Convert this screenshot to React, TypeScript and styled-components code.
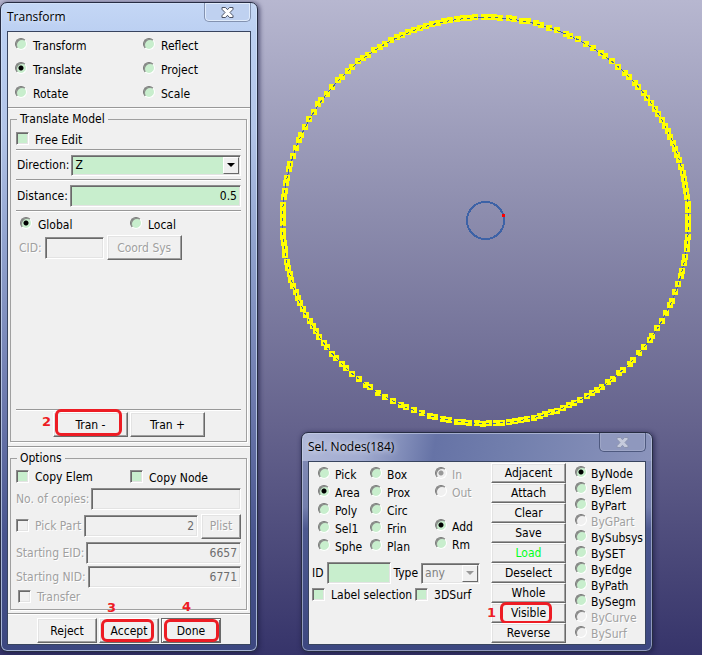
import React from 'react';
import styled, { createGlobalStyle, css } from 'styled-components';

const GlobalStyle = createGlobalStyle`
  * { box-sizing: border-box; }
  body {
    margin: 0;
    font-family: "DejaVu Sans Condensed", "DejaVu Sans", sans-serif;
    font-size: 12px;
    line-height: 14px;
    color: #000;
  }
  button, input, select { font: inherit; color: inherit; }
`;

const GREEN = '#c8eecd';
const sunken = css`
  border: 1px solid;
  border-color: #8c8c8c #fff #fff #8c8c8c;
  box-shadow: inset 1px 1px 0 #696969, inset -1px -1px 0 #e3e3e3;
`;
const embossed = css`
  color: #a0a0a0;
  text-shadow: 1px 1px 0 #fff;
`;

const Desktop = styled.main`
  position: relative;
  min-height: max(100vh, 655px);
  overflow: hidden;
  background: linear-gradient(#b7b7d0 0%, #8c8cad 33%, #65638d 65%, #36346a 100%);
`;

const Viewport = styled.svg`
  position: absolute;
  inset: 0;
  width: 100%;
  height: 100%;
  shape-rendering: crispEdges;
`;

const WindowFrame = styled.section<{ $kind: 'tool' | 'picker' }>`
  position: absolute;
  display: flex;
  flex-direction: column;
  padding: 0 6px 6px;
  border: 1px solid #262c42;
  border-radius: 7px;
  ${(p) =>
    p.$kind === 'tool'
      ? css`
          left: 0;
          top: 2px;
          bottom: 3px;
          width: 258px;
          background: linear-gradient(#c4d7f5 0, #bcd0f2 28px, #b2c4e8 20%, #93a5d0 36%, #6c79ad 62%, #49558f 82%, #3c4780 100%);
          box-shadow: inset 0 0 0 1px #d5e3f9b0, 1px 1px 4px 1px #1e1e4699;
        `
      : css`
          left: 301px;
          top: 432px;
          width: 352px;
          background: linear-gradient(100deg, #b0b8d8 0, #a2acd0 18%, #6673a6 38%, #727fad 60%, #8b94bc 100%) 0 0 / 100% 28px no-repeat,
            linear-gradient(#8790b9 0, #737eac 34%, #4d5990 44%, #3c4780 100%);
          box-shadow: inset 0 0 0 1px #cfd6eb90, 1px 1px 4px 1px #1e1e4699;
        `}
`;

const TitleBar = styled.header`
  display: flex;
  justify-content: space-between;
  flex: none;
  height: 28px;
`;

const Title = styled.h1`
  margin: 0;
  padding-top: 5px;
  font: 12px/18px "Open Sans", "Noto Sans", sans-serif;
  text-shadow: 0 0 6px #fff;
`;

const CloseButton = styled.button<{ $dim?: boolean }>`
  display: grid;
  place-items: center;
  width: 47px;
  height: 19px;
  padding: 0;
  border: 1px solid ${(p) => (p.$dim ? '#4e597f' : '#8392b0')};
  border-top: 0;
  border-radius: 0 0 5px 5px;
  background: ${(p) => (p.$dim ? '#8f98be' : '#bfd1f0')};
  box-shadow: inset 0 0 0 1px ${(p) => (p.$dim ? '#b4bcd566' : '#e0ebfb')};
`;

const Client = styled.div<{ $split?: boolean }>`
  display: flex;
  flex: 1;
  flex-direction: ${(p) => (p.$split ? 'row' : 'column')};
  padding-bottom: 1px;
  border: 1px solid #38445f;
  background: #f0f0f0;
`;

const Rule = styled.hr<{ $top?: number; $bottom?: number }>`
  flex: none;
  width: 100%;
  height: 2px;
  margin: ${(p) => p.$top ?? 0}px 0 ${(p) => p.$bottom ?? 0}px;
  border: 0;
  border-top: 1px solid #989898;
  background: #fff;
`;

const ModeGrid = styled.div`
  display: grid;
  grid-template-columns: 128px 1fr;
  grid-auto-rows: 24px;
  padding: 2px 0 0 7px;
`;

const Group = styled.fieldset<{ $grow?: boolean }>`
  display: flex;
  flex-direction: column;
  flex: ${(p) => (p.$grow ? '1' : 'none')};
  min-width: 0;
  margin: 3px 3px 0 2px;
  padding: 0 5px ${(p) => (p.$grow ? '4px' : '3px')};
  border: 1px solid #a0a0a0;
  box-shadow: 1px 1px 0 #fff;
`;

const Legend = styled.legend`
  margin-left: 1px;
  padding: 0 3px;
  height: 14px;
`;

const Row = styled.div<{ $h?: number; $gap?: number; $indent?: number; $top?: number }>`
  display: flex;
  align-items: center;
  flex: none;
  gap: ${(p) => p.$gap ?? 2}px;
  height: ${(p) => p.$h ?? 22}px;
  margin-top: ${(p) => p.$top ?? 0}px;
  padding-left: ${(p) => p.$indent ?? 0}px;
`;

const Cell = styled.div<{ $w: number }>`
  width: ${(p) => p.$w}px;
`;

const Spacer = styled.div`
  flex: 1;
`;

const ChoiceLabel = styled.label<{ $off?: boolean; $gap?: number }>`
  display: inline-flex;
  align-items: center;
  gap: ${(p) => p.$gap ?? 6}px;
  white-space: nowrap;
  ${(p) => p.$off && embossed}
`;

const RadioDot = styled.input`
  appearance: none;
  flex: none;
  width: 12px;
  height: 12px;
  margin: 0 0 4px;
  border: 1px solid;
  border-color: #777 #fff #fff #777;
  border-radius: 50%;
  background: ${GREEN};
  box-shadow: inset 1px 1px 0 #8a8a8a;
  &:checked { background: radial-gradient(circle, #000 0 2px, ${GREEN} 3px); }
  &:disabled { background: #f0f0f0; }
  &:disabled:checked { background: radial-gradient(circle, #999 0 2px, #f0f0f0 3px); }
`;

const TickBox = styled.input`
  appearance: none;
  flex: none;
  width: 13px;
  height: 13px;
  margin: 0 0 2px;
  background: ${GREEN};
  ${sunken}
  &:disabled { background: #f0f0f0; }
`;

const FieldLabel = styled.label<{ $off?: boolean }>`
  white-space: nowrap;
  ${(p) => p.$off && embossed}
`;

const Field = styled.input<{ $w?: number }>`
  flex: ${(p) => (p.$w ? `0 0 ${p.$w}px` : '1')};
  min-width: 0;
  height: 22px;
  margin: 0;
  padding: 0 3px;
  border-radius: 0;
  background: ${GREEN};
  text-align: right;
  ${sunken}
  &:disabled { background: #f0f0f0; color: #6d6d6d; }
`;

const SelectShell = styled.span<{ $w?: number }>`
  position: relative;
  display: flex;
  flex: ${(p) => (p.$w ? `0 0 ${p.$w}px` : '1')};
`;

const Select = styled.select`
  appearance: none;
  width: 100%;
  height: 21px;
  padding: 0 20px 0 3px;
  border-radius: 0;
  background: ${GREEN};
  ${sunken}
  &:disabled { background: #f0f0f0; color: #808080; opacity: 1; }
`;

const Arrow = styled.span<{ $off?: boolean }>`
  position: absolute;
  top: 2px;
  right: 2px;
  display: grid;
  place-items: center;
  width: 16px;
  height: 17px;
  background: #f0f0f0;
  border: 1px solid;
  border-color: #fff #696969 #696969 #fff;
  pointer-events: none;
  color: ${(p) => (p.$off ? '#999' : '#000')};
`;

const PushButton = styled.button<{ $w: number; $h?: number; $heavy?: boolean }>`
  position: relative;
  flex: none;
  width: ${(p) => p.$w}px;
  height: ${(p) => p.$h ?? 25}px;
  padding: 0;
  border: 1px solid;
  border-color: #fff #696969 #696969 #fff;
  border-radius: 0;
  background: #f0f0f0;
  box-shadow: inset -1px -1px 0 #a0a0a0, inset 1px 1px 0 #e3e3e3;
  white-space: nowrap;
  ${(p) => p.$heavy && css`border-color: #696969; box-shadow: inset 1px 1px 0 #fff, inset -1px -1px 0 #696969;`}
  &:disabled { ${embossed} }
`;

const ButtonSlot = styled.span`
  position: relative;
  display: flex;
`;

const Marker = styled.span<{ $box: string }>`
  position: absolute;
  inset: ${(p) => p.$box};
  border: 3px solid #ed1c24;
  border-radius: 6px;
  pointer-events: none;
`;

const StepNumber = styled.span<{ $x: number; $y: number }>`
  position: absolute;
  left: ${(p) => p.$x}px;
  top: ${(p) => p.$y}px;
  color: #ed1c24;
  font: bold 13px/14px "DejaVu Sans", sans-serif;
`;

const PickerMain = styled.div`
  flex: 1;
  min-width: 0;
  padding: 4px 0 0 3px;
`;

const PickerColumns = styled.div`
  display: grid;
  grid-template-columns: 52px 65px 1fr;
  padding-left: 6px;
`;

const Stack = styled.div<{ $pitch: number; $w?: number; $top?: number }>`
  display: grid;
  flex: none;
  align-content: start;
  grid-auto-rows: ${(p) => p.$pitch}px;
  width: ${(p) => (p.$w ? `${p.$w}px` : 'auto')};
  padding-top: ${(p) => p.$top ?? 0}px;
`;

const LoadText = styled.span`
  color: #00ff21;
`;

type ChoiceProps = { name: string; text: string; on?: boolean; off?: boolean; gap?: number };

const Radio = ({ name, text, on, off, gap }: ChoiceProps) => (
  <ChoiceLabel $off={off} $gap={gap}>
    <RadioDot type="radio" name={name} defaultChecked={on} disabled={off} />
    {text}
  </ChoiceLabel>
);

const Check = ({ text, off }: { text: string; off?: boolean }) => (
  <ChoiceLabel $off={off}>
    <TickBox type="checkbox" disabled={off} />
    {text}
  </ChoiceLabel>
);

const DropDown = ({ id, value, off, w }: { id: string; value: string; off?: boolean; w?: number }) => (
  <SelectShell $w={w}>
    <Select id={id} disabled={off} defaultValue={value}>
      <option>{value}</option>
    </Select>
    <Arrow $off={off}>
      <svg width="8" height="4" viewBox="0 0 8 4"><path d="M0 0h8L4 4z" fill="currentColor" /></svg>
    </Arrow>
  </SelectShell>
);

const Cross = ({ dim }: { dim?: boolean }) => (
  <svg width="13" height="11" viewBox="0 0 13 11">
    <path
      d="M1 .5h3.5l2 2.2 2-2.2H12v1.8L9 5.5l3 3.2v1.8H8.5l-2-2.2-2 2.2H1V8.7l3-3.2-3-3.2z"
      fill={dim ? '#c5cadc' : '#fff'}
      stroke={dim ? '#8c94b0' : '#4c5365'}
    />
  </svg>
);

const NODES = `283,205 283,211 283,217 284,197 285,191 286,183 287,178 289,169 290,164 293,156 296,148 299,140 301,135
305,127 309,119 314,112 318,104 321,100 327,94 332,87 338,80 342,77 348,71 352,67 358,61 363,58 368,55 374,50 380,47
385,44 391,40 397,37 402,35 408,32 414,30 420,28 426,26 432,24 438,23 444,21 450,20 457,19 463,18 469,18 475,17
484,17 490,17 494,17 500,18 509,18 514,19 522,21 528,21 536,23 541,25 549,28 557,30 566,34 570,36 578,39 586,44
593,48 601,53 605,56 612,61 618,67 625,73 629,77 635,83 638,87 644,93 647,98 651,103 655,109 658,114 662,120 665,126
668,131 670,137 673,143 675,149 677,155 679,160 681,167 683,173 684,179 685,185 686,191 687,197 688,204 688,210
688,217 688,223 688,229 688,237 687,243 687,249 685,257 684,263 682,271 681,276 678,284 675,292 672,301 670,305
666,313 662,321 657,328 652,336 650,340 644,347 639,353 633,360 630,364 623,370 619,373 613,379 608,382 602,387
597,390 592,393 587,396 580,400 574,403 569,405 563,408 557,411 551,412 545,414 540,416 534,418 527,419 521,420
515,421 509,422 502,423 496,423 489,423 483,424 477,423 469,423 463,422 457,422 449,420 443,419 435,417 430,416
422,413 414,410 406,407 401,405 393,401 385,397 378,393 370,387 366,385 359,379 352,374 346,368 342,364 336,358
332,354 327,347 324,343 319,337 316,331 313,326 310,321 306,315 303,309 300,303 298,298 296,292 293,286 291,280
290,274 288,268 287,262 285,255 285,249 284,243 283,237 283,231 283,223`
  .split(/\s+/)
  .map((pair) => pair.split(',').map(Number));

const ModelView = () => (
  <Viewport aria-label="Model view">
    <circle cx="485.5" cy="220.5" r="203" fill="none" stroke="#3f63a8" />
    <circle cx="485.5" cy="220.5" r="203" fill="none" stroke="#c00040" strokeDasharray="2 5" />
    {NODES.map(([x, y]) => (
      <rect key={`${x}-${y}`} x={x - 3} y={y - 3} width="6" height="6" fill="#ff0" />
    ))}
    <circle cx="485.5" cy="220.5" r="203" fill="none" stroke="#4668a0" strokeDasharray="3 4" />
    <circle cx="485.5" cy="220.5" r="18.5" fill="none" stroke="#3d62a6" strokeWidth="2" />
    <rect x="502" y="214" width="3" height="3" fill="#f00" />
  </Viewport>
);

const TransformWindow = () => (
  <WindowFrame $kind="tool">
    <TitleBar>
      <Title>Transform</Title>
      <CloseButton aria-label="Close"><Cross /></CloseButton>
    </TitleBar>
    <Client>
      <ModeGrid>
        <Radio name="mode" text="Transform" />
        <Radio name="mode" text="Reflect" />
        <Radio name="mode" text="Translate" on />
        <Radio name="mode" text="Project" />
        <Radio name="mode" text="Rotate" />
        <Radio name="mode" text="Scale" />
      </ModeGrid>
      <Rule $top={1} />
      <Group $grow>
        <Legend>Translate Model</Legend>
        <Row $top={4} $h={19}><Check text="Free Edit" /></Row>
        <Rule $bottom={3} />
        <Row $indent={1}>
          <FieldLabel htmlFor="direction">Direction:</FieldLabel>
          <DropDown id="direction" value="Z" />
        </Row>
        <Rule $top={3} $bottom={4} />
        <Row $indent={1}>
          <FieldLabel htmlFor="distance">Distance:</FieldLabel>
          <Field id="distance" defaultValue="0.5" />
        </Row>
        <Rule $top={3} />
        <Row $top={2} $h={21} $indent={4} $gap={0}>
          <Cell $w={110}><Radio name="frame" text="Global" on /></Cell>
          <Radio name="frame" text="Local" />
        </Row>
        <Row $h={25} $indent={3} $gap={3}>
          <FieldLabel htmlFor="cid" $off>CID:</FieldLabel>
          <Field id="cid" $w={59} disabled />
          <PushButton $w={75} disabled>Coord Sys</PushButton>
        </Row>
        <Spacer />
        <Rule $bottom={1} />
        <Row $h={25} $indent={37}>
          <ButtonSlot>
            <PushButton $w={75}>Tran -</PushButton>
            <Marker $box="-3px 6px 1px 2px" />
            <StepNumber $x={-11} $y={3}>2</StepNumber>
          </ButtonSlot>
          <PushButton $w={75}>Tran +</PushButton>
        </Row>
      </Group>
      <Rule $top={4} />
      <Group>
        <Legend>Options</Legend>
        <Row $top={2} $h={21} $gap={0}>
          <Cell $w={114}><Check text="Copy Elem" /></Cell>
          <Check text="Copy Node" />
        </Row>
        <Row>
          <FieldLabel htmlFor="copies" $off>No. of copies:</FieldLabel>
          <Field id="copies" disabled />
        </Row>
        <Row $top={5} $gap={3}>
          <Check text="Pick Part" off />
          <Field aria-label="Pick Part" defaultValue="2" disabled />
          <PushButton $w={40} disabled>Plist</PushButton>
        </Row>
        <Row $top={5}>
          <FieldLabel htmlFor="eid" $off>Starting EID:</FieldLabel>
          <Field id="eid" defaultValue="6657" disabled />
        </Row>
        <Row $top={2}>
          <FieldLabel htmlFor="nid" $off>Starting NID:</FieldLabel>
          <Field id="nid" defaultValue="6771" disabled />
        </Row>
        <Row $h={18} $indent={2}><Check text="Transfer" off /></Row>
      </Group>
      <Rule $top={3} $bottom={3} />
      <Row $h={25} $indent={29}>
        <PushButton $w={60}>Reject</PushButton>
        <ButtonSlot>
          <PushButton $w={60}>Accept</PushButton>
          <Marker $box="1px 5px 1px 2px" />
          <StepNumber $x={8} $y={-17}>3</StepNumber>
        </ButtonSlot>
        <ButtonSlot>
          <PushButton $w={60} $heavy>Done</PushButton>
          <Marker $box="1px 2px 1px 3px" />
          <StepNumber $x={21} $y={-18}>4</StepNumber>
        </ButtonSlot>
      </Row>
    </Client>
  </WindowFrame>
);

const SHAPES_A = ['Pick', 'Area', 'Poly', 'Sel1', 'Sphe'];
const SHAPES_B = ['Box', 'Prox', 'Circ', 'Frin', 'Plan'];
const ACTIONS = ['Adjacent', 'Attach', 'Clear', 'Save', 'Load', 'Deselect', 'Whole', 'Visible', 'Reverse'];
const FILTERS = ['ByNode', 'ByElem', 'ByPart', 'ByGPart', 'BySubsys', 'BySET', 'ByEdge', 'ByPath', 'BySegm', 'ByCurve', 'BySurf'];
const FILTERS_OFF = ['ByGPart', 'ByCurve', 'BySurf'];

const SelectionWindow = () => (
  <WindowFrame $kind="picker">
    <TitleBar>
      <Title>Sel. Nodes(184)</Title>
      <CloseButton $dim aria-label="Close"><Cross dim /></CloseButton>
    </TitleBar>
    <Client $split>
      <PickerMain>
        <PickerColumns>
          <Stack $pitch={18}>
            {SHAPES_A.map((t) => <Radio key={t} name="shape" text={t} on={t === 'Area'} gap={5} />)}
          </Stack>
          <Stack $pitch={18}>
            {SHAPES_B.map((t) => <Radio key={t} name="shape" text={t} gap={5} />)}
          </Stack>
          <div>
            <Stack $pitch={18}>
              <Radio name="side" text="In" on off gap={5} />
              <Radio name="side" text="Out" off gap={5} />
            </Stack>
            <Stack $pitch={18} $top={16}>
              <Radio name="op" text="Add" on gap={5} />
              <Radio name="op" text="Rm" gap={5} />
            </Stack>
          </div>
        </PickerColumns>
        <Row $top={6} $gap={3}>
          <FieldLabel htmlFor="node-id">ID</FieldLabel>
          <Field id="node-id" $w={64} />
          <FieldLabel htmlFor="type">Type</FieldLabel>
          <DropDown id="type" value="any" off w={59} />
        </Row>
        <Row $gap={3}>
          <Check text="Label selection" />
          <Check text="3DSurf" />
        </Row>
      </PickerMain>
      <Stack $pitch={20} $w={84} $top={1}>
        {ACTIONS.map((t) => (
          <ButtonSlot key={t}>
            <PushButton $w={75} $h={20}>{t === 'Load' ? <LoadText>{t}</LoadText> : t}</PushButton>
            {t === 'Visible' && (
              <>
                <Marker $box="-1px 23px -1px 9px" />
                <StepNumber $x={-4} $y={3}>1</StepNumber>
              </>
            )}
          </ButtonSlot>
        ))}
      </Stack>
      <Stack $pitch={16} $w={70} $top={4}>
        {FILTERS.map((t) => (
          <Radio key={t} name="filter" text={t} on={t === 'ByNode'} off={FILTERS_OFF.includes(t)} gap={4} />
        ))}
      </Stack>
    </Client>
  </WindowFrame>
);

export default function App() {
  return (
    <Desktop>
      <GlobalStyle />
      <ModelView />
      <TransformWindow />
      <SelectionWindow />
    </Desktop>
  );
}
